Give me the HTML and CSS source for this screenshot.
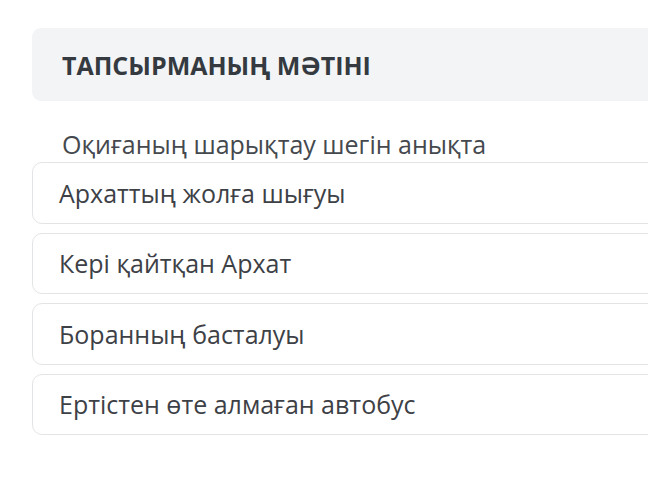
FILE: index.html
```html
<!DOCTYPE html>
<html lang="kk">
<head>
<meta charset="utf-8">
<link rel="stylesheet" href="styles.css">
</head>
<body>
<div class="page">
  <div class="task-head">
    <h2 class="task-title">ТАПСЫРМАНЫҢ МӘТІНІ</h2>
  </div>
  <p class="question">Оқиғаның шарықтау шегін анықта</p>
  <ul class="options">
    <li class="option">Архаттың жолға шығуы</li>
    <li class="option">Кері қайтқан Архат</li>
    <li class="option">Боранның басталуы</li>
    <li class="option">Ертістен өте алмаған автобус</li>
  </ul>
</div>
</body>
</html>
```
FILE: styles.css
```css
html, body {
  margin: 0;
  padding: 0;
  background: #ffffff;
  overflow: hidden;
}
body {
  font-family: "Open Sans", "Noto Sans", sans-serif;
  color: #3d4146;
}
.page {
  width: 700px;
  padding: 28px 0 0 32px;
}
.task-head {
  height: 73px;
  background: #f3f4f6;
  border-radius: 9px;
  display: flex;
  align-items: center;
  padding-left: 30px;
}
.task-title {
  margin: 0;
  font-size: 25px;
  font-weight: 700;
  color: #343a40;
  letter-spacing: 0;
}
.question {
  margin: 26px 0 0 30px;
  font-size: 25px;
  line-height: 34px;
  color: #45494e;
}
.options {
  list-style: none;
  margin: 1px 0 0;
  padding: 0;
  display: flex;
  flex-direction: column;
  gap: 9px;
}
.option {
  box-sizing: border-box;
  height: 61.5px;
  border: 1px solid #e3e4e6;
  border-radius: 10px;
  padding-left: 26px;
  display: flex;
  align-items: center;
  font-size: 25px;
  color: #3d4146;
}
```
